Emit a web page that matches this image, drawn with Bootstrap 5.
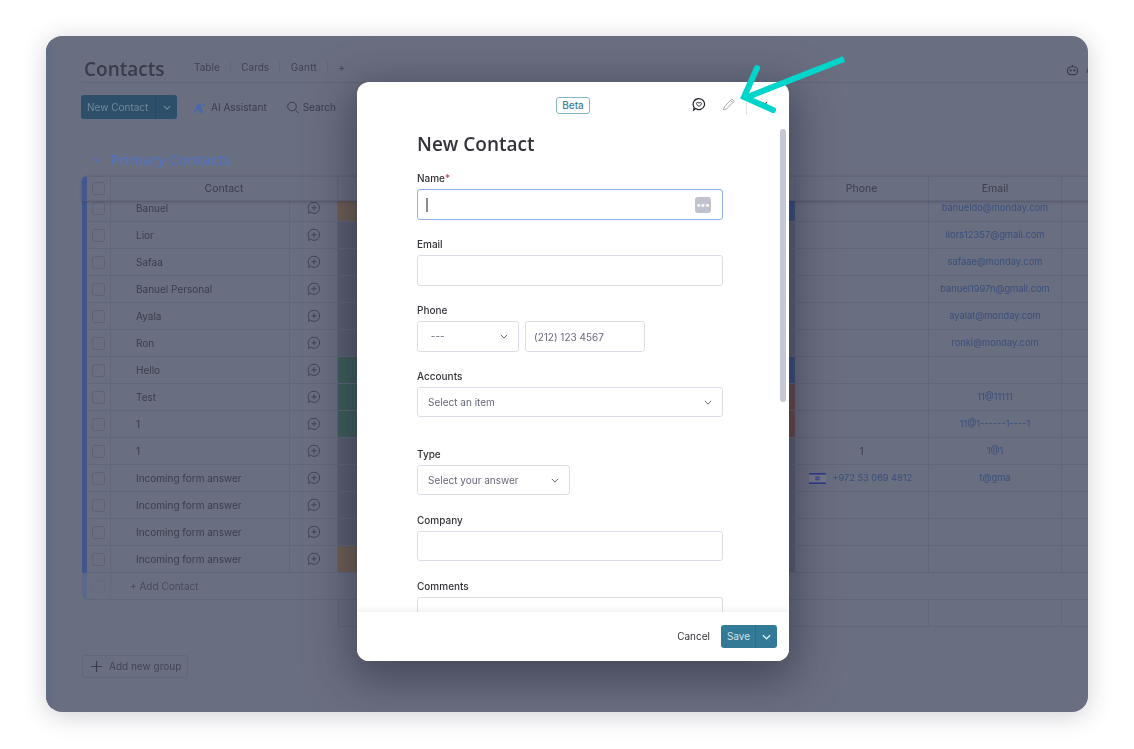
<!doctype html>
<html lang="en">
<head>
<meta charset="utf-8">
<title>New Contact</title>
<link href="https://cdn.jsdelivr.net/npm/bootstrap@5.3.0/dist/css/bootstrap.min.css" rel="stylesheet">
<style>
html,body{height:749px;overflow:hidden;background:#fff}
body{font-family:"Inter","Liberation Sans",sans-serif;font-size:10px;color:#3a3d4c;padding:36px 46px 37px}
.app-win{position:relative;height:676px;background:#6a6e81;border-radius:16px;box-shadow:0 4px 24px rgba(40,44,70,.22);overflow:hidden;padding-left:6px;filter:blur(.35px)}
.app-win::before{content:"";position:absolute;left:0;top:0;bottom:0;width:6px;background:#646c84}
.app-top{height:47px;margin-left:30px;border-bottom:1px solid #62667a;padding:20px 0 0 2px}
.app-title{font-family:"Open Sans","Liberation Sans",sans-serif;font-size:19px;font-weight:600;color:#383b4a;margin:0 30px 0 0;line-height:1;width:80px;white-space:nowrap}
.tab-lnk{font-size:10px;color:#3f4252;padding:0 10px 0 0;margin-right:10.5px;border-right:1px solid #63677b;line-height:12px;margin-top:-4px}
.tab-lnk:last-of-type{border:0}
.tab-gantt{letter-spacing:.2px}
.robot{position:absolute;left:1020px;top:26px;display:flex;gap:7px;align-items:center;font-size:10px;white-space:nowrap}
.robot svg{flex:none}
.tool-row{margin:12px 0 0 29px;height:24px;gap:16px}
.btn-new,.btn-new:hover{background:#2d4f69;color:#71889b;font-size:10px;padding:0 0 0 6px;height:24px;width:96px;border:0;border-radius:3px;display:flex;align-items:center}
.btn-new span{width:69px;text-align:left;border-right:1px solid #294860;line-height:24px;margin-right:7px}
.tool-item{font-size:10px;color:#3a3d4c;gap:6px;padding-top:1px}
.tool-srch{margin-left:4px;gap:4px}
.group-title{margin:31px 0 0 40px;height:20px;gap:9px;color:#5473ba;font-family:"Open Sans","Liberation Sans",sans-serif;font-weight:600;font-size:14.5px}
.tbl-wrap{position:relative;margin:6px 0 0 30px}
.tbl-head,.tbl-line{display:flex;height:27px;border-bottom:1px solid #62667a}
.tbl-head{height:25px;position:relative;z-index:2;background:#6a6e81;box-shadow:0 1px 3px rgba(50,52,70,.4);border-top:1px solid #62667a;border-left:5px solid #42588e;border-top-left-radius:5px;font-size:10.5px}
.tbl-body{height:372px;overflow:hidden;border-left:5px solid #41568a}
.tbl-inner{margin-top:-6px}
.ce{border-right:1px solid #62667a;display:flex;align-items:center;justify-content:center;flex:none;height:100%}
.c-check{width:24px}.c-name{width:179px;justify-content:flex-start;padding-left:25px}.c-upd{width:48px}
.c-stat{width:457px;background:#5c5f72;border-right:0}.c-stat.o{background:#705f54}.c-stat.g{background:#3e5e5b}
.c-edge{width:6px;height:100%;flex:none;background:#5c5f72;margin-left:-6px;position:relative}.c-edge.b{background:#3b4f7e}.c-edge.r{background:#66494d}
.c-phone{width:134px;color:#3a3d4c}.c-mail{width:133px;color:#394f7a;font-size:9.3px}.c-rest{flex:1}
.c-tel{color:#394f7a;font-size:9.2px;padding-right:2px}
.c-head{justify-content:center;padding:0}
.c-w227{width:227px}.c-w457{width:457px}.c-w133{width:133px}
.box{width:13px;height:13px;border:1px solid #5f6275;border-radius:3px;display:block}
.tbl-add{display:flex;height:27px;border-left:5px solid #5c6887;border-bottom:1px solid #62667a;border-bottom-left-radius:5px;color:#474a5b}
.tbl-add .ce{border-right-color:#656a7c}
.c-addname{width:227px;border:0!important;justify-content:flex-start;padding-left:19px}
.box.dim{border-color:#656a7c}
.tbl-sum{display:flex;height:27px;margin-left:256px;border:1px solid #62667a;border-width:0 0 1px 1px;border-bottom-left-radius:4px}
.c-sumgap{width:590px;flex:none}.c-sum{width:133px}
.btn-group-add{margin:28px 0 0 30px;width:106px;height:23px;border:1px solid #62667a;border-radius:3px;color:#414455;gap:6px;padding:0 0 0 7px;font-size:10px;background:none}
.modal-box{position:absolute;left:311px;top:46px;width:432px;height:579px;background:#fff;border:0;border-radius:12px;box-shadow:0 12px 44px 6px rgba(30,32,48,.5);overflow:hidden;z-index:5}
.modal-box .modal-header{height:47px;border:0;padding:0 0 0 199px;flex:none;position:relative}
.beta-tag{font-weight:500;font-size:10px;color:#3a7f9e;border:1px solid #85b4c8;background:#fff;border-radius:3px;padding:0;width:34px;height:17px;line-height:15px}
.hd-ic{position:absolute;top:15px}
.hd-sep{position:absolute;left:389px;top:15px;width:1px;height:18px;background:#e2e3ea}
.hd-x{position:absolute;left:403px;top:18px}
.ic-chat{left:335px}.ic-pen{left:365px}
.modal-box .modal-body{flex:1;overflow:hidden;padding:0 0 0 60px;position:relative}
.form-h{font-family:"Open Sans","Liberation Sans",sans-serif;font-weight:600;font-size:19px;color:#323338;margin:3px 0 16px;line-height:24px}
.fld{width:306px;margin-bottom:18px}
.fld-30{margin-bottom:19px}
.fld .form-label{font-size:10px;font-weight:500;color:#323338;margin:0 0 4px;line-height:13px;display:block}
.req{color:#d83a52}
.fld .form-control,.fld .form-select{font-size:10px;height:31px;min-height:0;padding:0 10px;border:1px solid #dcdde6;border-radius:3px;color:#676879;box-shadow:none}
.fld .form-control::placeholder{color:#676879}
.fld .in-phone{padding-left:8px}
.fld .form-select{background-size:8px;background-position:right 10px center;background-image:url("data:image/svg+xml,%3csvg xmlns='http://www.w3.org/2000/svg' viewBox='0 0 10 6'%3e%3cpath d='M1 1l4 4 4-4' fill='none' stroke='%23555766' stroke-width='1.1'/%3e%3c/svg%3e")}
.fld .sel30{height:30px}
.fld .foc{border-color:#8fb2e8}
.caret-bar{position:absolute;left:9px;top:9px;width:1.5px;height:14px;background:#8a8a90}
.dots{position:absolute;right:12px;top:8px;width:16px;height:16px;background:#c0c3cf;border-radius:3px;color:#fff;font-size:9px;font-weight:700;line-height:15px;text-align:center}
.sel-phone{width:102px}.in-phone{width:120px}.sel-type{width:153px}
.phone-row{gap:6px}
.f-gap{margin-bottom:31px}
.scroll-th{position:absolute;left:423px;top:0;width:6px;height:273px;background:#c5c7d4;border-radius:3px}
.modal-box .modal-footer{height:49px;flex:none;border:0;padding:0 12px 0 0;gap:11px;box-shadow:0 -2px 6px rgba(30,32,48,.07);position:relative;background:#fff;justify-content:flex-end;align-items:center}
.modal-box .modal-footer>*{margin:0}
.btn-cancel{font-size:10px;color:#323338;padding:0;border:0;background:none}
.btn-save{background:#327a96;color:#cfe0e7;font-size:10px;border:0;height:23px;padding:0;border-radius:3px 0 0 3px;width:35px}
.btn-savem{background:#327a96;border:0;border-left:1px solid #2c6f89;height:23px;width:22px;padding:0;border-radius:0 3px 3px 0;display:flex;align-items:center;justify-content:center}
.arrow-over{position:absolute;left:0;top:0;z-index:9;pointer-events:none}
</style>
</head>
<body>
<div class="app-win">
  <div class="app-top d-flex align-items-center">
    <h1 class="app-title">Contacts</h1>
    <span class="tab-lnk">Table</span><span class="tab-lnk">Cards</span><span class="tab-lnk tab-gantt">Gantt</span><span class="tab-lnk">+</span>
  </div>
  <div class="robot"><svg width="13" height="12" viewBox="0 0 14 13" fill="none" stroke="#383b4a" stroke-width="1.2"><rect x="1.500" y="3" width="11" height="8.500" rx="4"/><path d="M7 3V1"/><circle cx="5" cy="7" r=".6" fill="#383b4a"/><circle cx="9" cy="7" r=".6" fill="#383b4a"/></svg><span>A</span></div>
  <div class="tool-row d-flex align-items-center">
    <button class="btn btn-new" type="button"><span>New Contact</span><svg width="8" height="5" viewBox="0 0 10 6" fill="none" stroke="#71889b" stroke-width="1.4"><path d="M1 1l4 4 4-4"/></svg></button>
    <div class="tool-item d-flex align-items-center"><svg width="12" height="12" viewBox="0 0 12 12"><path d="M5 1.500h2.500L10 11H6.600L5.600 8H3.400L2.200 11H.3z" fill="#4a69ab"/><circle cx="10.500" cy="2.500" r="1.200" fill="#4a69ab"/></svg>AI Assistant</div>
    <div class="tool-item tool-srch d-flex align-items-center"><svg width="12" height="13" viewBox="0 0 12 13" fill="none" stroke="#3a3d4c" stroke-width="1"><circle cx="5" cy="5.500" r="4.300"/><path d="M8.200 8.700l3.400 3.600"/></svg>Search</div>
  </div>
  <div class="group-title d-flex align-items-center"><svg width="9" height="6" viewBox="0 0 10 6" fill="none" stroke="#4f6fb5" stroke-width="1.4"><path d="M1 1l4 4 4-4"/></svg>Primary Contacts</div>

  <div class="tbl-wrap">
    <div class="tbl-head">
      <div class="ce c-check"><i class="box"></i></div><div class="ce c-head c-w227">Contact</div><div class="ce c-head c-w457"></div><div class="ce c-head c-phone">Phone</div><div class="ce c-head c-w133">Email</div><div class="c-rest"></div>
    </div>
    <div class="tbl-body"><div class="tbl-inner">
      <div class="tbl-line"><div class="ce c-check"><i class="box"></i></div><div class="ce c-name">Banuel</div><div class="ce c-upd"><svg width="14" height="14" viewBox="0 0 14 14" fill="none" stroke="#3f4252" stroke-width=".95"><path d="M7 1.200a5.600 5.600 0 1 1-3.400 10L1.400 12.600l.7-2.600A5.600 5.600 0 0 1 7 1.200zM7 4.200v5.200M4.400 6.800h5.200"/></svg></div><div class="ce c-stat o"></div><div class="c-edge b"></div><div class="ce c-phone"></div><div class="ce c-mail">banueldo@monday.com</div><div class="c-rest"></div></div>
      <div class="tbl-line"><div class="ce c-check"><i class="box"></i></div><div class="ce c-name">Lior</div><div class="ce c-upd"><svg width="14" height="14" viewBox="0 0 14 14" fill="none" stroke="#3f4252" stroke-width=".95"><path d="M7 1.200a5.600 5.600 0 1 1-3.400 10L1.400 12.600l.7-2.600A5.600 5.600 0 0 1 7 1.200zM7 4.200v5.200M4.400 6.800h5.200"/></svg></div><div class="ce c-stat"></div><div class="c-edge"></div><div class="ce c-phone"></div><div class="ce c-mail">liors12357@gmail.com</div><div class="c-rest"></div></div>
      <div class="tbl-line"><div class="ce c-check"><i class="box"></i></div><div class="ce c-name">Safaa</div><div class="ce c-upd"><svg width="14" height="14" viewBox="0 0 14 14" fill="none" stroke="#3f4252" stroke-width=".95"><path d="M7 1.200a5.600 5.600 0 1 1-3.400 10L1.400 12.600l.7-2.600A5.600 5.600 0 0 1 7 1.200zM7 4.200v5.200M4.400 6.800h5.200"/></svg></div><div class="ce c-stat"></div><div class="c-edge"></div><div class="ce c-phone"></div><div class="ce c-mail">safaae@monday.com</div><div class="c-rest"></div></div>
      <div class="tbl-line"><div class="ce c-check"><i class="box"></i></div><div class="ce c-name">Banuel Personal</div><div class="ce c-upd"><svg width="14" height="14" viewBox="0 0 14 14" fill="none" stroke="#3f4252" stroke-width=".95"><path d="M7 1.200a5.600 5.600 0 1 1-3.400 10L1.400 12.600l.7-2.600A5.600 5.600 0 0 1 7 1.200zM7 4.200v5.200M4.400 6.800h5.200"/></svg></div><div class="ce c-stat"></div><div class="c-edge"></div><div class="ce c-phone"></div><div class="ce c-mail">banuel1997n@gmail.com</div><div class="c-rest"></div></div>
      <div class="tbl-line"><div class="ce c-check"><i class="box"></i></div><div class="ce c-name">Ayala</div><div class="ce c-upd"><svg width="14" height="14" viewBox="0 0 14 14" fill="none" stroke="#3f4252" stroke-width=".95"><path d="M7 1.200a5.600 5.600 0 1 1-3.400 10L1.400 12.600l.7-2.600A5.600 5.600 0 0 1 7 1.200zM7 4.200v5.200M4.400 6.800h5.200"/></svg></div><div class="ce c-stat"></div><div class="c-edge"></div><div class="ce c-phone"></div><div class="ce c-mail">ayalat@monday.com</div><div class="c-rest"></div></div>
      <div class="tbl-line"><div class="ce c-check"><i class="box"></i></div><div class="ce c-name">Ron</div><div class="ce c-upd"><svg width="14" height="14" viewBox="0 0 14 14" fill="none" stroke="#3f4252" stroke-width=".95"><path d="M7 1.200a5.600 5.600 0 1 1-3.400 10L1.400 12.600l.7-2.600A5.600 5.600 0 0 1 7 1.200zM7 4.200v5.200M4.400 6.800h5.200"/></svg></div><div class="ce c-stat"></div><div class="c-edge"></div><div class="ce c-phone"></div><div class="ce c-mail">ronki@monday.com</div><div class="c-rest"></div></div>
      <div class="tbl-line"><div class="ce c-check"><i class="box"></i></div><div class="ce c-name">Hello</div><div class="ce c-upd"><svg width="14" height="14" viewBox="0 0 14 14" fill="none" stroke="#3f4252" stroke-width=".95"><path d="M7 1.200a5.600 5.600 0 1 1-3.400 10L1.400 12.600l.7-2.600A5.600 5.600 0 0 1 7 1.200zM7 4.200v5.200M4.400 6.800h5.200"/></svg></div><div class="ce c-stat g"></div><div class="c-edge b"></div><div class="ce c-phone"></div><div class="ce c-mail"></div><div class="c-rest"></div></div>
      <div class="tbl-line"><div class="ce c-check"><i class="box"></i></div><div class="ce c-name">Test</div><div class="ce c-upd"><svg width="14" height="14" viewBox="0 0 14 14" fill="none" stroke="#3f4252" stroke-width=".95"><path d="M7 1.200a5.600 5.600 0 1 1-3.400 10L1.400 12.600l.7-2.600A5.600 5.600 0 0 1 7 1.200zM7 4.200v5.200M4.400 6.800h5.200"/></svg></div><div class="ce c-stat g"></div><div class="c-edge r"></div><div class="ce c-phone"></div><div class="ce c-mail">11@11111</div><div class="c-rest"></div></div>
      <div class="tbl-line"><div class="ce c-check"><i class="box"></i></div><div class="ce c-name">1</div><div class="ce c-upd"><svg width="14" height="14" viewBox="0 0 14 14" fill="none" stroke="#3f4252" stroke-width=".95"><path d="M7 1.200a5.600 5.600 0 1 1-3.400 10L1.400 12.600l.7-2.600A5.600 5.600 0 0 1 7 1.200zM7 4.200v5.200M4.400 6.800h5.200"/></svg></div><div class="ce c-stat g"></div><div class="c-edge r"></div><div class="ce c-phone"></div><div class="ce c-mail">11@1------1----1</div><div class="c-rest"></div></div>
      <div class="tbl-line"><div class="ce c-check"><i class="box"></i></div><div class="ce c-name">1</div><div class="ce c-upd"><svg width="14" height="14" viewBox="0 0 14 14" fill="none" stroke="#3f4252" stroke-width=".95"><path d="M7 1.200a5.600 5.600 0 1 1-3.400 10L1.400 12.600l.7-2.600A5.600 5.600 0 0 1 7 1.200zM7 4.200v5.200M4.400 6.800h5.200"/></svg></div><div class="ce c-stat"></div><div class="c-edge"></div><div class="ce c-phone">1</div><div class="ce c-mail">1@1</div><div class="c-rest"></div></div>
      <div class="tbl-line"><div class="ce c-check"><i class="box"></i></div><div class="ce c-name">Incoming form answer</div><div class="ce c-upd"><svg width="14" height="14" viewBox="0 0 14 14" fill="none" stroke="#3f4252" stroke-width=".95"><path d="M7 1.200a5.600 5.600 0 1 1-3.400 10L1.400 12.600l.7-2.600A5.600 5.600 0 0 1 7 1.200zM7 4.200v5.200M4.400 6.800h5.200"/></svg></div><div class="ce c-stat"></div><div class="c-edge"></div><div class="ce c-phone c-tel gap-1"><svg width="17" height="11" viewBox="0 0 17 11"><rect width="17" height="11" fill="#73778b"/><rect width="17" height="1.600" fill="#2d3a8c"/><rect y="9.400" width="17" height="1.600" fill="#2d3a8c"/><path d="M8.500 3.400l2 3.400h-4zM8.500 7.600l2-3.400h-4z" fill="none" stroke="#2d3a8c" stroke-width=".6"/></svg>&nbsp;+972 53 069 4812</div><div class="ce c-mail">t@gma</div><div class="c-rest"></div></div>
      <div class="tbl-line"><div class="ce c-check"><i class="box"></i></div><div class="ce c-name">Incoming form answer</div><div class="ce c-upd"><svg width="14" height="14" viewBox="0 0 14 14" fill="none" stroke="#3f4252" stroke-width=".95"><path d="M7 1.200a5.600 5.600 0 1 1-3.400 10L1.400 12.600l.7-2.600A5.600 5.600 0 0 1 7 1.200zM7 4.200v5.200M4.400 6.800h5.200"/></svg></div><div class="ce c-stat"></div><div class="c-edge"></div><div class="ce c-phone"></div><div class="ce c-mail"></div><div class="c-rest"></div></div>
      <div class="tbl-line"><div class="ce c-check"><i class="box"></i></div><div class="ce c-name">Incoming form answer</div><div class="ce c-upd"><svg width="14" height="14" viewBox="0 0 14 14" fill="none" stroke="#3f4252" stroke-width=".95"><path d="M7 1.200a5.600 5.600 0 1 1-3.400 10L1.400 12.600l.7-2.600A5.600 5.600 0 0 1 7 1.200zM7 4.200v5.200M4.400 6.800h5.200"/></svg></div><div class="ce c-stat"></div><div class="c-edge"></div><div class="ce c-phone"></div><div class="ce c-mail"></div><div class="c-rest"></div></div>
      <div class="tbl-line"><div class="ce c-check"><i class="box"></i></div><div class="ce c-name">Incoming form answer</div><div class="ce c-upd"><svg width="14" height="14" viewBox="0 0 14 14" fill="none" stroke="#3f4252" stroke-width=".95"><path d="M7 1.200a5.600 5.600 0 1 1-3.400 10L1.400 12.600l.7-2.600A5.600 5.600 0 0 1 7 1.200zM7 4.200v5.200M4.400 6.800h5.200"/></svg></div><div class="ce c-stat o"></div><div class="c-edge"></div><div class="ce c-phone"></div><div class="ce c-mail"></div><div class="c-rest"></div></div>
    </div></div>
    <div class="tbl-add"><div class="ce c-check"><i class="box dim"></i></div><div class="ce c-addname">+ Add Contact</div></div>
    <div class="tbl-sum"><div class="c-sumgap ce"></div><div class="ce c-sum"></div><div class="c-rest"></div></div>
  </div>
  <button class="btn btn-group-add d-flex align-items-center" type="button"><svg width="13" height="13" viewBox="0 0 13 13" stroke="#3a3d4c" stroke-width="1.2"><path d="M6.500 1v11M1 6.500h11"/></svg>Add new group</button>

  <div class="modal-content modal-box">
    <div class="modal-header">
      <span class="badge beta-tag">Beta</span>
      <svg class="hd-ic ic-chat" width="14" height="15" viewBox="0 0 14 15" fill="none" stroke="#1f2028" stroke-width="1.2"><path d="M7 1.600a5.500 5.500 0 1 1-3.300 9.900L1.600 13l.6-2.700A5.500 5.500 0 0 1 7 1.600z"/><path d="M7 9.600 4.700 7.200c-.9-1 .6-2.600 2.300-1 1.700-1.600 3.200 0 2.300 1z" stroke-width="1"/></svg>
      <svg class="hd-ic ic-pen" width="14" height="15" viewBox="0 0 14 15" fill="none" stroke="#a9abb5" stroke-width="1"><path d="M10 2l2.200 2.200-7.700 7.800-3 .9.800-3.100zM8.700 3.400l2.200 2.200"/></svg>
      <span class="hd-sep"></span>
      <svg class="hd-x" width="12" height="12" viewBox="0 0 12 12" stroke="#323338" stroke-width="1.2"><path d="M7 2 3 7M3 3l4 4"/></svg>
    </div>
    <div class="modal-body">
      <h2 class="form-h">New Contact</h2>
      <div class="fld"><label class="form-label">Name<span class="req">*</span></label><div class="position-relative"><input class="form-control foc" type="text"><span class="caret-bar"></span><span class="dots">•••</span></div></div>
      <div class="fld"><label class="form-label">Email</label><input class="form-control" type="text"></div>
      <div class="fld"><label class="form-label">Phone</label><div class="d-flex phone-row"><select class="form-select sel-phone"><option>&nbsp;---</option></select><input class="form-control in-phone" type="text" placeholder="(212) 123 4567"></div></div>
      <div class="fld f-gap"><label class="form-label">Accounts</label><select class="form-select sel30"><option>Select an item</option></select></div>
      <div class="fld fld-30"><label class="form-label">Type</label><select class="form-select sel-type sel30"><option>Select your answer</option></select></div>
      <div class="fld fld-30"><label class="form-label">Company</label><input class="form-control sel30" type="text"></div>
      <div class="fld"><label class="form-label">Comments</label><input class="form-control" type="text"></div>
      <div class="scroll-th"></div>
    </div>
    <div class="modal-footer">
      <button class="btn btn-cancel" type="button">Cancel</button>
      <div class="btn-group"><button class="btn btn-save" type="button">Save</button><button class="btn btn-savem" type="button"><svg width="9" height="6" viewBox="0 0 10 6" fill="none" stroke="#e3eff3" stroke-width="1.4"><path d="M1 1l4 4 4-4"/></svg></button></div>
    </div>
  </div>
</div>
<svg class="arrow-over" width="1134" height="749" viewBox="0 0 1134 749" fill="none" stroke="#00d5cc" stroke-width="6"><path d="M844 59 745 98"/><path stroke-linecap="round" d="M757 68 744 97 773 110"/></svg>
</body>
</html>
